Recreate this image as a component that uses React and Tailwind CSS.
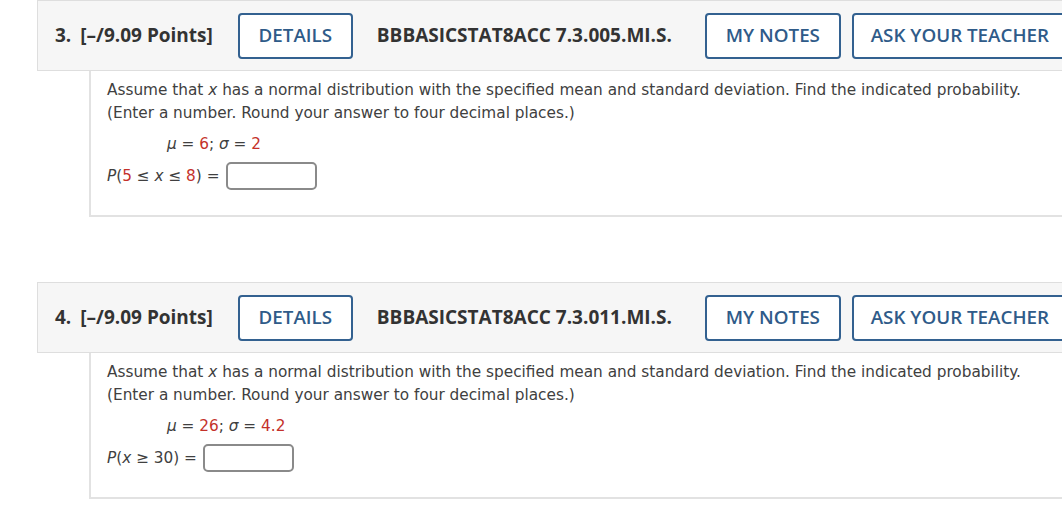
import React from "react";

const questions = [
  {
    num: "3.",
    code: "BBBASICSTAT8ACC 7.3.005.MI.S.",
    mu: "6",
    sigma: "2",
    prob: (
      <>
        <i>P</i>(<span className="text-[#c4312a]">5</span> ≤ <i>x</i> ≤{" "}
        <span className="text-[#c4312a]">8</span>) =
      </>
    ),
  },
  {
    num: "4.",
    code: "BBBASICSTAT8ACC 7.3.011.MI.S.",
    mu: "26",
    sigma: "4.2",
    prob: (
      <>
        <i>P</i>(<i>x</i> ≥ 30) =
      </>
    ),
  },
];

const Button = ({ children, className }) => (
  <div
    className={`h-[46px] flex items-center justify-center rounded-[4px] border-2 border-[#336190] bg-white text-[#2f5b89] text-[18.8px] font-semibold ${className}`}>
    {children}
  </div>
);

const Question = ({ q }) => (
  <div className="w-[1100px] ml-[37px]">
    <div
      className="h-[71px] flex items-center border border-[#dedede] bg-[#f6f6f6] text-[#333] text-[19px] font-bold"
      style={{ fontFamily: '"Open Sans", sans-serif' }}>
      <span className="ml-[17px]">{q.num}</span>
      <span className="ml-[9px]">[–/9.09 Points]</span>
      <Button className="ml-[25px] w-[115px]">DETAILS</Button>
      <span className="ml-[24px] font-bold w-[291px] whitespace-nowrap">{q.code}</span>
      <Button className="ml-[37px] w-[136px]">MY NOTES</Button>
      <Button className="ml-[11px] w-[216px]">ASK YOUR TEACHER</Button>
    </div>
    <div
      className="ml-[52px] h-[146px] border-l-2 border-b-2 border-[#e2e2e2] pl-[16px] pt-[8px] text-[#404040] text-[15.3px]"
      style={{ fontFamily: '"DejaVu Sans", Verdana, sans-serif' }}>
      <p className="leading-[23px]">
        Assume that <i>x</i> has a normal distribution with the specified mean and standard deviation. Find the indicated probability.
      </p>
      <p className="leading-[23px]">(Enter a number. Round your answer to four decimal places.)</p>
      <p className="mt-[9px] ml-[60px] leading-[20px]">
        <i>μ</i> = <span className="text-[#c4312a]">{q.mu}</span>; <i>σ</i> ={" "}
        <span className="text-[#c4312a]">{q.sigma}</span>
      </p>
      <div className="mt-[8px] flex items-center">
        <span>{q.prob}</span>
        <div className="ml-[6px] w-[91px] h-[28px] rounded-[5px] border-2 border-[#8a8a8a] bg-white" />
      </div>
    </div>
  </div>
);

export default function App() {
  return (
    <div className="w-[1062px] h-[514px] overflow-hidden bg-white">
      <Question q={questions[0]} />
      <div className="h-[65px]" />
      <Question q={questions[1]} />
    </div>
  );
}
